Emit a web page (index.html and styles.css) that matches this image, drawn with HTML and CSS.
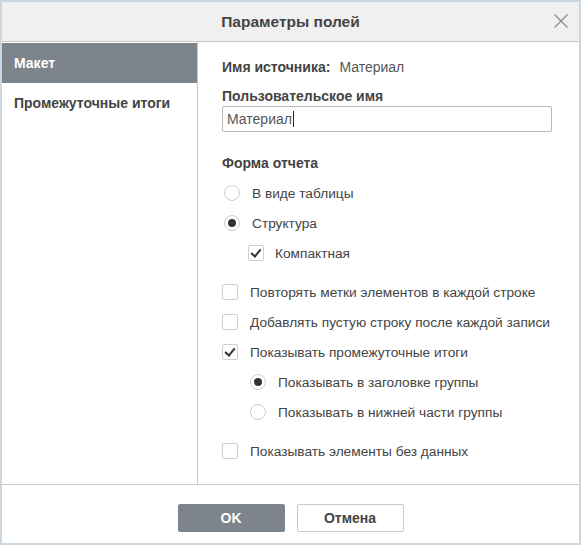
FILE: index.html
```html
<!DOCTYPE html>
<html lang="ru">
<head>
  <meta charset="UTF-8">
  <title>Параметры полей</title>
  <link rel="stylesheet" href="styles.css">
</head>
<body>
  <div class="dialog">
    <div class="dialog-header">
      <span class="dialog-title">Параметры полей</span>
      <span class="close-btn">
        <svg width="16" height="16" viewBox="0 0 16 16"><path d="M1.5 1.5L14.5 14.5M14.5 1.5L1.5 14.5" stroke="#8a8a8a" stroke-width="1.2" fill="none"/></svg>
      </span>
    </div>

    <div class="dialog-main">
      <div class="sidebar">
        <div class="side-item active">Макет</div>
        <div class="side-item">Промежуточные итоги</div>
      </div>

      <div class="content">
        <div class="row">
          <span class="label">Имя источника:</span>
          <span class="value">Материал</span>
        </div>
        <div class="label field-label">Пользовательское имя</div>
        <div class="input">Материал<span class="caret"></span></div>

        <div class="row section-title"><span class="label">Форма отчета</span></div>
        <div class="row option"><span class="radio"></span>В виде таблицы</div>
        <div class="row option"><span class="radio checked"></span>Структура</div>
        <div class="row option sub"><span class="checkbox checked"></span>Компактная</div>

        <div class="row option group"><span class="checkbox"></span>Повторять метки элементов в каждой строке</div>
        <div class="row option"><span class="checkbox"></span>Добавлять пустую строку после каждой записи</div>
        <div class="row option"><span class="checkbox checked"></span>Показывать промежуточные итоги</div>
        <div class="row option sub"><span class="radio checked"></span>Показывать в заголовке группы</div>
        <div class="row option sub"><span class="radio"></span>Показывать в нижней части группы</div>

        <div class="row option group"><span class="checkbox"></span>Показывать элементы без данных</div>
      </div>
    </div>

    <div class="dialog-footer">
      <button class="btn btn-ok">OK</button>
      <button class="btn btn-cancel">Отмена</button>
    </div>
  </div>
</body>
</html>
```

FILE: styles.css
```css
html, body {
  margin: 0;
  padding: 0;
}

body {
  font-family: "Liberation Sans", Arial, sans-serif;
  font-size: 14px;
  color: #444;
  background: #fff;
}

.dialog {
  width: 581px;
  height: 545px;
  box-sizing: border-box;
  border: 2px solid #cbd6e3;
  display: flex;
  flex-direction: column;
  background: #fff;
}

.dialog-header {
  height: 39px;
  background: #f0f0f0;
  border-bottom: 1px solid #c9c9c9;
  display: flex;
  align-items: center;
  justify-content: center;
  position: relative;
  flex-shrink: 0;
}

.dialog-title {
  font-size: 15.5px;
  font-weight: bold;
  color: #444;
}

.close-btn {
  position: absolute;
  right: 10px;
  top: 11px;
  width: 16px;
  height: 16px;
}

.dialog-main {
  flex: 1;
  display: flex;
  border-bottom: 1px solid #c9c9c9;
}

.sidebar {
  width: 195px;
  border-right: 1px solid #c9c9c9;
  padding-top: 1px;
  flex-shrink: 0;
}

.side-item {
  height: 40px;
  line-height: 40px;
  padding-left: 12px;
  font-weight: bold;
  color: #444;
}

.side-item.active {
  background: #7d848b;
  color: #fff;
}

.content {
  flex: 1;
  padding: 10px 0 0 24px;
}

.row {
  height: 30px;
  display: flex;
  align-items: center;
  color: #444;
}

.option {
  font-size: 13.7px;
}

.label {
  font-weight: bold;
  color: #444;
}

.value {
  margin-left: 9px;
  color: #555;
}

.field-label {
  height: 20px;
  line-height: 20px;
  margin-top: 4px;
}

.input {
  width: 330px;
  height: 26px;
  box-sizing: border-box;
  border: 1px solid #b9b9b9;
  border-radius: 2px;
  padding-left: 4px;
  display: flex;
  align-items: center;
  color: #555;
}

.caret {
  display: inline-block;
  width: 1px;
  height: 16px;
  background: #222;
  margin-left: 1px;
}

.section-title {
  margin-top: 16px;
}

.group {
  margin-top: 9px;
}

.sub {
  padding-left: 26px;
}

.radio {
  width: 16px;
  height: 16px;
  box-sizing: border-box;
  border: 1px solid #cfcfcf;
  border-radius: 50%;
  margin: 0 12px 0 2px;
  display: flex;
  align-items: center;
  justify-content: center;
  flex-shrink: 0;
}

.radio.checked::after {
  content: "";
  width: 8px;
  height: 8px;
  border-radius: 50%;
  background: #333;
}

.checkbox {
  width: 16px;
  height: 16px;
  box-sizing: border-box;
  border: 1px solid #cfcfcf;
  border-radius: 2px;
  margin: 0 12px 0 0;
  position: relative;
  flex-shrink: 0;
}

.sub .checkbox {
  margin-left: 0;
  margin-right: 11px;
}

.checkbox.checked::after {
  content: "";
  position: absolute;
  left: 4px;
  top: 1px;
  width: 4px;
  height: 8px;
  border-right: 2px solid #333;
  border-bottom: 2px solid #333;
  transform: rotate(40deg);
}

.dialog-footer {
  height: 58px;
  display: flex;
  align-items: center;
  justify-content: center;
  gap: 12px;
  flex-shrink: 0;
  padding-top: 7px;
  box-sizing: border-box;
}

.btn {
  width: 107px;
  height: 28px;
  font-family: "Liberation Sans", Arial, sans-serif;
  font-size: 14px;
  font-weight: bold;
  border-radius: 2px;
  cursor: pointer;
}

.btn-ok {
  background: #7d848b;
  border: 1px solid #7d848b;
  color: #fff;
}

.btn-cancel {
  background: #fff;
  border: 1px solid #c9c9c9;
  color: #444;
}
```
